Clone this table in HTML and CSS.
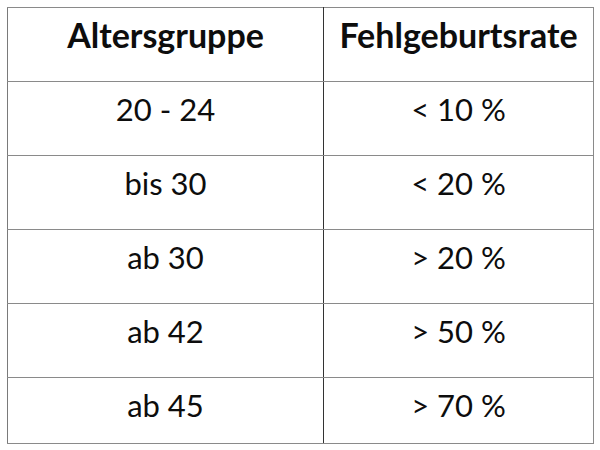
FILE: index.html
```html
<!DOCTYPE html>
<html lang="de">
<head>
<meta charset="utf-8">
<link rel="stylesheet" href="styles.css">
</head>
<body>
<table class="rates">
  <thead>
    <tr class="head-row">
      <th class="col-age">Altersgruppe</th>
      <th class="col-rate">Fehlgeburtsrate</th>
    </tr>
  </thead>
  <tbody>
    <tr><td class="col-age">20 - 24</td><td class="col-rate">&lt; 10 %</td></tr>
    <tr><td class="col-age">bis 30</td><td class="col-rate">&lt; 20 %</td></tr>
    <tr><td class="col-age">ab 30</td><td class="col-rate">&gt; 20 %</td></tr>
    <tr><td class="col-age">ab 42</td><td class="col-rate">&gt; 50 %</td></tr>
    <tr class="last-row"><td class="col-age">ab 45</td><td class="col-rate">&gt; 70 %</td></tr>
  </tbody>
</table>
</body>
</html>
```
FILE: styles.css
```css
html, body {
  margin: 0;
  padding: 0;
  background: #ffffff;
}
body {
  padding: 7px;
  font-family: Lato, "Liberation Sans", sans-serif;
  color: #0d0d0d;
}
.rates {
  border-collapse: collapse;
  width: 587px;
  table-layout: fixed;
}
.rates th,
.rates td {
  height: 74px;
  padding: 9px 0 0 0;
  box-sizing: border-box;
  vertical-align: top;
  text-align: center;
  font-size: 31px;
  line-height: 36px;
  border-top: 1px solid #8a8a8a;
  border-bottom: 1px solid #8a8a8a;
}
.rates th {
  font-weight: 700;
  font-size: 34px;
  padding-top: 9px;
}
.rates td {
  font-weight: 400;
}
.col-age {
  width: 316px;
  border-left: 1px solid #7a7a7a;
  border-right: 1px solid #333333;
}
.col-rate {
  border-right: 1px solid #8a8a8a;
}
.last-row td {
  height: 66px;
}
```
